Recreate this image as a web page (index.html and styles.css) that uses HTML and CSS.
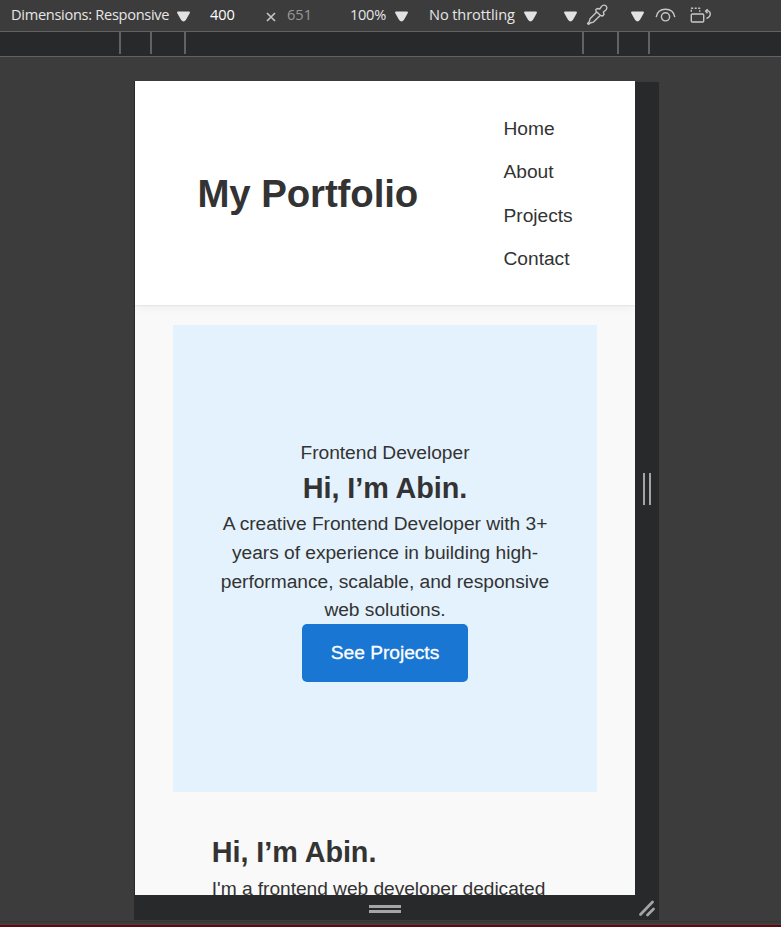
FILE: index.html
```html
<!DOCTYPE html>
<html lang="en">
<head>
<meta charset="utf-8">
<title>My Portfolio</title>
<link rel="stylesheet" href="styles.css">
</head>
<body>
<div class="toolbar">
  <span class="dims">Dimensions: Responsive</span>
  <svg class="tri" viewBox="0 0 13 11"><path d="M1 .5h11q1.300.2.8 1.500L9 8.800Q6.500 12 4 8.800L.2 2Q-.3.7 1 .5Z"/></svg>
  <span class="width">400</span>
  <svg class="times" viewBox="0 0 10 10"><path d="M1 1l8 8M9 1L1 9"/></svg>
  <span class="height">651</span>
  <span class="zoom">100%</span>
  <svg class="tri" viewBox="0 0 13 11"><path d="M1 .5h11q1.300.2.8 1.500L9 8.800Q6.500 12 4 8.800L.2 2Q-.3.7 1 .5Z"/></svg>
  <span class="throttle">No throttling</span>
  <svg class="tri" viewBox="0 0 13 11"><path d="M1 .5h11q1.300.2.8 1.500L9 8.800Q6.500 12 4 8.800L.2 2Q-.3.7 1 .5Z"/></svg>
  <svg class="tri" viewBox="0 0 13 11"><path d="M1 .5h11q1.300.2.8 1.500L9 8.800Q6.500 12 4 8.800L.2 2Q-.3.7 1 .5Z"/></svg>
  <svg class="icon" width="22" height="22" viewBox="0 0 22 22"><path d="M11 7.800L4 14.800 3.300 17.600 1.600 19.500l.8.800 2.200-1.500 2.900-.7 7.200-7M10 7.200l-.2-1.700 1.500-1 2.400.5 1.500-2.200c1.700-2.400 5-2.100 5.500.3.400 1.600-.2 2.800-1.700 3.700l-1.600 1.200.6 2.500-1.400 1.500-2-.5Z"/></svg>
  <svg class="tri" viewBox="0 0 13 11"><path d="M1 .5h11q1.300.2.8 1.500L9 8.800Q6.500 12 4 8.800L.2 2Q-.3.7 1 .5Z"/></svg>
  <svg class="icon" width="22" height="22" viewBox="0 0 22 22"><path d="M1.200 13.200C2 7.800 6 5.200 10.500 5.200s8.500 2.600 9.300 8"/><circle cx="10.500" cy="12.800" r="4.100"/></svg>
  <svg class="icon" width="22" height="22" viewBox="0 0 22 22"><rect x="1.300" y="10" width="12.400" height="8" rx="1"/><path d="M1.300 7.800V4.200h8.400v3.600" stroke-dasharray="2 1.500"/><path d="M17.800 5.200l-2.300 1.800 2 2.300M15.700 7c5.500-1.500 6.300 5.500.8 7.500"/></svg>
</div>
<div class="ruler"><i></i><i></i><i></i><i></i><i></i><i></i></div>
<div class="stage">
  <div class="screen">
    <header class="site-header">
      <h1>My Portfolio</h1>
      <nav><a>Home</a><a>About</a><a>Projects</a><a>Contact</a></nav>
    </header>
    <section class="hero">
      <p>Frontend Developer</p>
      <h2>Hi, I’m Abin.</h2>
      <p>A creative Frontend Developer with 3+ years of experience in building high-performance, scalable, and responsive web solutions.</p>
      <a class="btn">See Projects</a>
    </section>
    <section class="about">
      <h2>Hi, I’m Abin.</h2>
      <p>I'm a frontend web developer dedicated</p>
    </section>
  </div>
  <div class="side"><div class="grip-v"></div></div>
  <div class="bottom"><div class="grip-h"></div></div>
  <div class="corner"><svg width="16" height="17" viewBox="0 0 16 17"><path d="M1.500 14.500L13.500 2M8.500 15l6-6"/></svg></div>
</div>
<div class="drawer"></div>
</body>
</html>
```

FILE: styles.css
```css
* { box-sizing: border-box; margin: 0; padding: 0; }
body {
  width: 781px;
  height: 927px;
  overflow: hidden;
  display: flex;
  flex-direction: column;
  background: #3c3c3c;
  font-family: "Liberation Sans", Arial, sans-serif;
}
.toolbar {
  flex: none;
  height: 31px;
  padding-left: 11px;
  display: grid;
  grid-template-columns: 166px 33px 55px 22px 63px 45px 34px 95px 40px 22px 45px 24px 35px 25px;
  align-items: center;
  color: #e6e6e6;
  font: 14.6px/28px "Open Sans", "Segoe UI", sans-serif;
  white-space: nowrap;
}
.toolbar span { margin-top: -3px; }
.dims { letter-spacing: -0.3px; }
.width { color: #fff; letter-spacing: -0.1px; }
.height { color: #999; letter-spacing: 0; }
.zoom { letter-spacing: -0.3px; }
.throttle { letter-spacing: -0.1px; }
.tri { width: 13px; height: 11px; fill: #e2e2e2; margin-top: 2px; }
.times { width: 10px; height: 10px; margin: 3px 0 0 1px; fill: none; stroke: #c4c4c4; stroke-width: 1.7; }
.icon { margin-top: -1px; fill: none; stroke: #c7c7c7; stroke-width: 1.4; stroke-linejoin: round; }
.ruler {
  flex: none;
  height: 26px;
  padding-left: 119px;
  display: grid;
  grid-template-columns: 31px 34px 398px 35px 31px 2px;
  background: #28292b;
  border-top: 1px solid #626262;
  border-bottom: 1px solid #626262;
}
.ruler i { width: 2px; height: 22px; background: #626262; }
.stage {
  flex: none;
  width: 525px;
  height: 839px;
  margin: 24px 0 0 134px;
  display: grid;
  grid-template-columns: 501px 24px;
  grid-template-rows: 814px 25px;
}
.screen {
  overflow: hidden;
  background: #f9f9f9;
  color: #333;
  font-size: 19.2px;
  line-height: 28.8px;
  letter-spacing: -0.03px;
  border-left: 1px solid #28292b;
}
.site-header {
  height: 224.4px;
  padding: 2.4px 62.4px 0;
  display: flex;
  align-items: center;
  justify-content: space-between;
  background: #fff;
  box-shadow: 0 1px 1px rgba(0, 0, 0, .05), 0 2px 10px rgba(0, 0, 0, .05);
}
h1 { font-size: 38.4px; line-height: 57.6px; letter-spacing: -0.08px; padding-bottom: 2px; }
h2 { font-size: 28.8px; line-height: 43.2px; letter-spacing: -0.06px; }
nav { display: flex; flex-direction: column; gap: 14.4px; }
.hero {
  height: 467.2px;
  margin: 19.8px 38.4px 0;
  padding: 2.4px 38.4px 0;
  display: flex;
  flex-direction: column;
  align-items: center;
  justify-content: center;
  text-align: center;
  background: #e3f2fd;
}
.hero > p:first-child { padding-top: 1px; margin-bottom: -1px; }
.btn {
  padding: 14.4px 28.8px;
  border-radius: 5px;
  background: #1976d2;
  color: #fff;
  margin-top: -1px;
  -webkit-text-stroke: 0.3px #fff;
}
.about { padding: 38.4px 76.8px; }
.about p { padding-top: 1px; white-space: nowrap; letter-spacing: -0.05px; }
.side { margin-top: 1px; background: #28292b; display: grid; place-items: center; }
.grip-v { width: 8px; height: 32px; margin-right: 1px; border: solid #a5a5a5; border-width: 0 2.5px; }
.bottom { padding-top: 3px; background: #28292b; display: grid; place-items: center; }
.grip-h { width: 32px; height: 8px; border: solid #a5a5a5; border-width: 3px 0 3px; }
.corner { background: #28292b; padding: 5px 0 0 4px; }
.corner svg { display: block; fill: none; stroke: #a5a5a5; stroke-width: 2.7; stroke-linecap: round; }
.drawer {
  flex: none;
  height: 7px;
  background: linear-gradient(#3c3c3c 1px, #353535 1px 2px, #3c3c3c 2px 4px, #683234 4px 5px, #4f0e13 5px);
}
```
